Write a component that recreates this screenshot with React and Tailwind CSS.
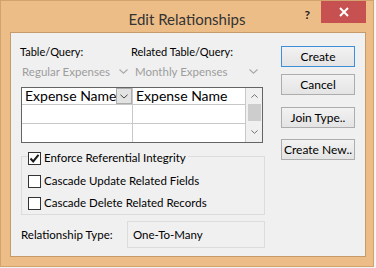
import React from 'react';

const Chevron = ({ up = false, color = '#a8a8a8', w = 9, h = 5 }) => (
  <svg width={w} height={h} viewBox="0 0 9 5" fill="none">
    <path
      d={up ? 'M0.5 4.5 L4.5 0.8 L8.5 4.5' : 'M0.5 0.5 L4.5 4.2 L8.5 0.5'}
      stroke={color}
      strokeWidth="1.1"
    />
  </svg>
);

const Check = () => (
  <svg width="11" height="11" viewBox="0 0 11 11" fill="none">
    <path d="M1.5 5.5 L4.2 8.4 L9.5 1.8" stroke="#1a1a1a" strokeWidth="2" />
  </svg>
);

const CheckRow = ({ checked, label, className = '' }) => (
  <div className={`flex items-center h-[16px] w-fit bg-[#f0f0f0] pr-[2px] ${className}`}>
    <div className="w-[13px] h-[13px] border border-[#333333] bg-white flex items-center justify-center">
      {checked && <Check />}
    </div>
    <span className="ml-[3px] text-[11.5px] leading-[16px] text-black whitespace-nowrap">{label}</span>
  </div>
);

const Button = ({ children, primary, className = '' }) => (
  <div
    className={`h-[21px] w-[74px] flex items-center justify-center text-[12px] text-black border bg-gradient-to-b from-[#f2f2f2] to-[#e4e4e4] whitespace-nowrap ${
      primary ? 'border-[#3c8fdd]' : 'border-[#adadad]'
    } ${className}`}
  >
    {children}
  </div>
);

const App = () => {
  return (
    <div className="w-[376px] h-[268px] bg-[#f4f4f4] font-['Lato',sans-serif]">
      <div className="w-[374px] h-[267px] bg-[#edbd88] border border-[#d3a36f] flex flex-col">
        {/* title bar */}
        <div className="h-[31px] grid grid-cols-[1fr_auto_1fr]">
          <div />
          <div className="mt-[8px] text-[15px] leading-[20px] text-[#333333]">Edit Relationships</div>
          <div className="flex justify-end items-start pr-[7px]">
            <span className="mt-[6px] mr-[11px] text-[12px] leading-[16px] font-bold text-[#222]">?</span>
            <div className="w-[45px] h-[22px] bg-[#c75050] flex items-center justify-center">
              <svg width="10" height="10" viewBox="0 0 10 10">
                <path d="M1 1 L9 9 M9 1 L1 9" stroke="white" strokeWidth="2" />
              </svg>
            </div>
          </div>
        </div>

        {/* client area */}
        <div className="ml-[9px] w-[356px] h-[225px] border border-[#c79a69] bg-[#f0f0f0] flex">
          {/* left column */}
          <div className="ml-[10px] w-[244px] flex flex-col">
            <div className="mt-[11px] flex text-[11px] leading-[16px] text-black whitespace-nowrap">
              <span className="w-[111px] -ml-px">Table/Query:</span>
              <span>Related Table/Query:</span>
            </div>

            <div className="mt-[3px] flex h-[17px] whitespace-nowrap">
              <div className="w-[111px] -ml-px flex items-center justify-between pl-[2px] pr-[3px] text-[11.5px] text-[#9d9d9d]">
                <span>Regular Expenses</span>
                <Chevron />
              </div>
              <div className="w-[131px] flex items-center justify-between pl-[4px] pr-[4px] text-[11.5px] text-[#9d9d9d]">
                <span>Monthly Expenses</span>
                <Chevron />
              </div>
            </div>

            {/* grid */}
            <div className="mt-[7px] w-[242px] h-[56px] border border-[#646464] bg-white flex">
              <div className="w-[111px] border-r border-[#c8c8c8] flex flex-col">
                <div className="h-[17px] border-b border-[#c8c8c8] flex">
                  <span className="flex-1 overflow-hidden whitespace-nowrap pl-[3px] text-[14px] leading-[16px] text-black">
                    Expense Name
                  </span>
                  <div className="w-[16px] h-[16px] bg-[#e3e3e3] border border-[#acacac] flex items-center justify-center">
                    <Chevron color="#444" w={8} h={5} />
                  </div>
                </div>
                <div className="h-[19px] border-b border-[#c8c8c8]" />
                <div className="h-[18px]" />
              </div>
              <div className="w-[113px] border-r border-[#c8c8c8] flex flex-col">
                <div className="h-[17px] border-b border-[#c8c8c8] pl-[3px] text-[14px] leading-[16px] text-black whitespace-nowrap">
                  Expense Name
                </div>
                <div className="h-[19px] border-b border-[#c8c8c8]" />
                <div className="h-[18px]" />
              </div>
              <div className="w-[16px] bg-[#f0f0f0] flex flex-col items-center">
                <div className="h-[16px] flex items-center justify-center">
                  <Chevron up color="#606060" w={7} h={4} />
                </div>
                <div className="w-[13px] h-[17px] bg-[#cdcdcd]" />
                <div className="flex-1 flex items-center justify-center">
                  <Chevron color="#606060" w={7} h={4} />
                </div>
              </div>
            </div>

            {/* referential integrity group */}
            <div className="mt-[13px] w-[244px] border border-[#dcdcdc] pl-[6px] pb-[3px]">
              <CheckRow checked label="Enforce Referential Integrity" className="-mt-[7px]" />
              <CheckRow label="Cascade Update Related Fields" className="mt-[7px]" />
              <CheckRow label="Cascade Delete Related Records" className="mt-[6px]" />
            </div>

            <div className="mt-[6px] flex items-center">
              <span className="w-[106px] text-[11.5px] leading-[16px] text-black whitespace-nowrap">Relationship Type:</span>
              <div className="w-[138px] h-[27px] border border-[#dcdcdc] flex items-center pl-[5px] text-[11.5px] text-black">
                One-To-Many
              </div>
            </div>
          </div>

          {/* right column */}
          <div className="ml-[16px] flex flex-col">
            <Button primary className="mt-[13px]">Create</Button>
            <Button className="mt-[7px]">Cancel</Button>
            <Button className="mt-[12px]">Join Type..</Button>
            <Button className="mt-[11px]">Create New..</Button>
          </div>
        </div>
      </div>
    </div>
  );
};

export default App;
